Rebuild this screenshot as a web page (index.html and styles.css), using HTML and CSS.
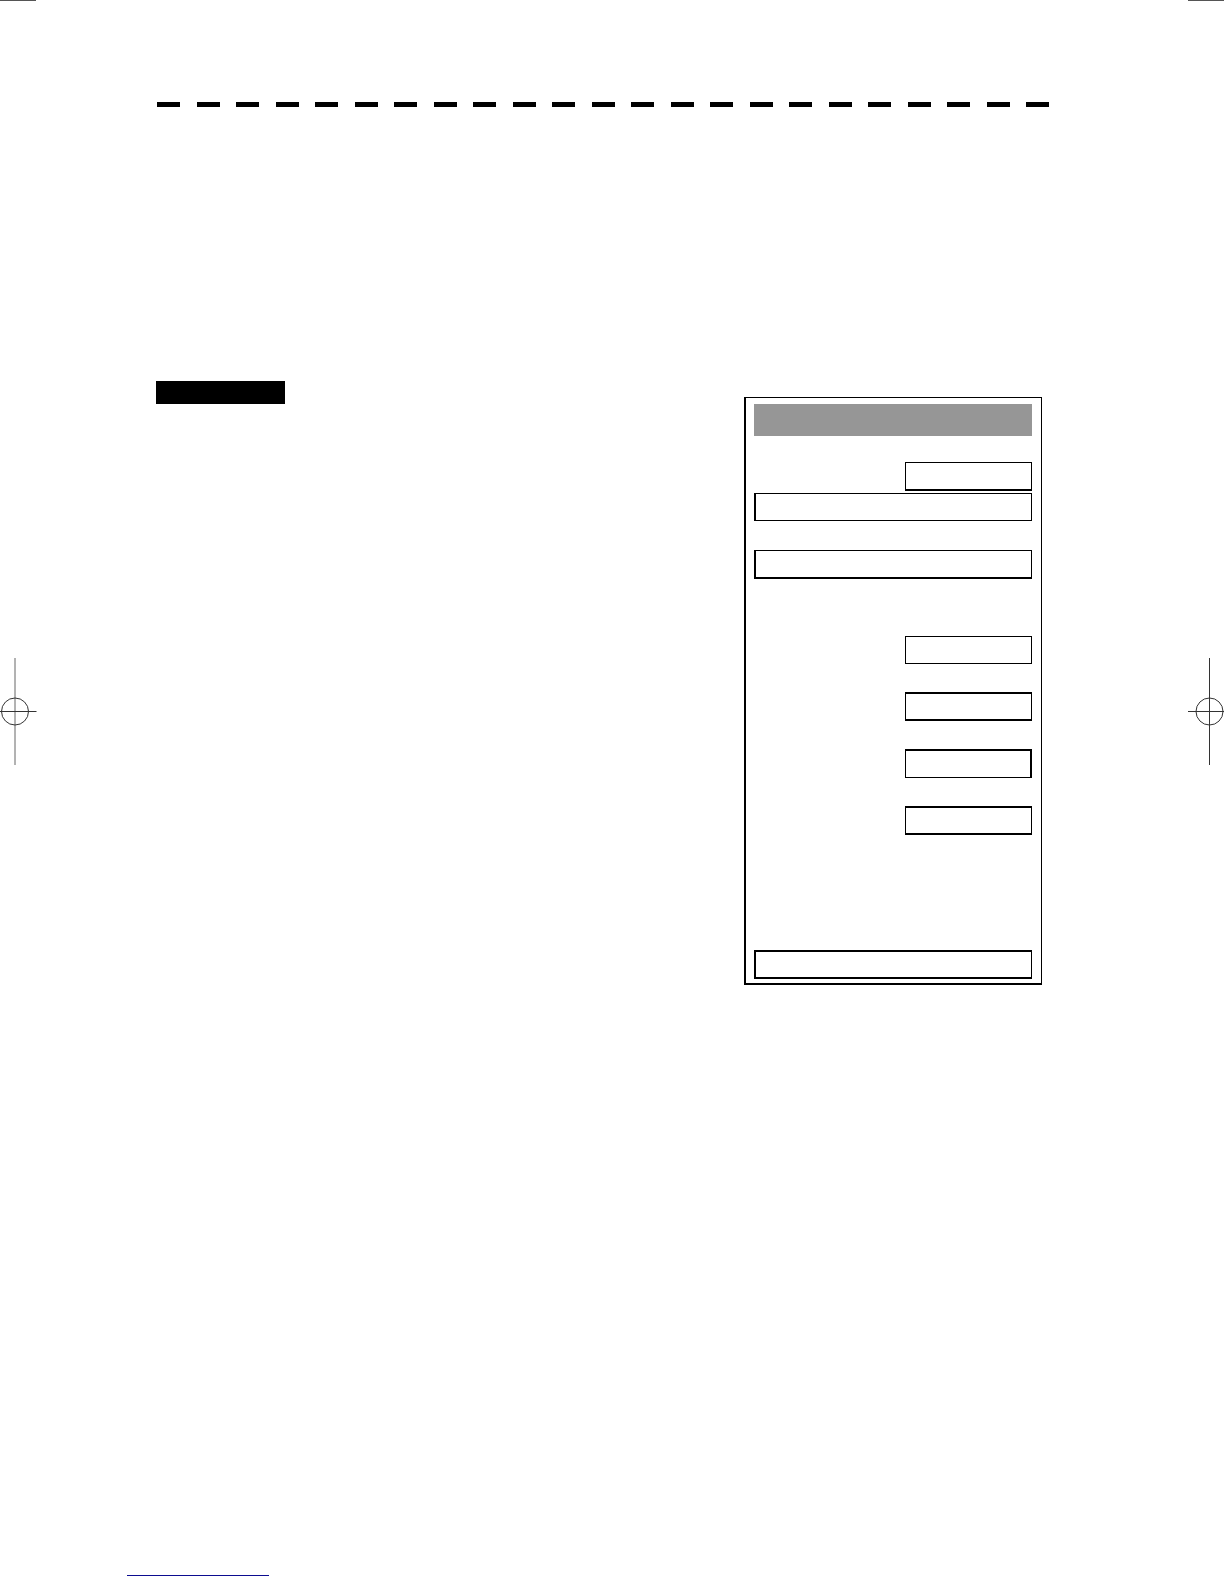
FILE: index.html
```
<!DOCTYPE html>
<html lang="en">

<head>
    <meta charset="UTF-8">
    <meta name="viewport" content="width=device-width, initial-scale=1.0">
    <title>Manual Page</title>
    <link rel="stylesheet" href="styles.css">
</head>

<body>

    <!-- Trim marks -->
    <div class="trim-marks">
        <span class="trim"></span>
        <span class="trim"></span>
    </div>

    <div class="sheet">
        <svg class="register" width="37" height="107" viewBox="0 0 37 107" fill="none" stroke="#333">
            <path d="M15 0V107" stroke="#666" />
            <path d="M0 53.5H36.5" />
            <circle cx="15" cy="53.5" r="13.5" />
        </svg>

        <main class="content">
            <div class="dashes">
                <span></span><span></span><span></span><span></span><span></span><span></span>
                <span></span><span></span><span></span><span></span><span></span><span></span>
                <span></span><span></span><span></span><span></span><span></span><span></span>
                <span></span><span></span><span></span><span></span><span></span>
            </div>

            <div class="columns">
                <div class="label"></div>

                <form class="panel">
                    <div class="panel-title"></div>
                    <input type="text" class="field short thick-bottom after-title" aria-label="Field 1">
                    <input type="text" class="field thick-left joined" aria-label="Field 2">
                    <input type="text" class="field thick-left thick-bottom" aria-label="Field 3">
                    <input type="text" class="field short new-group" aria-label="Field 4">
                    <input type="text" class="field short thick-top thick-bottom" aria-label="Field 5">
                    <input type="text" class="field short thick-top thick-right" aria-label="Field 6">
                    <input type="text" class="field short thick-top thick-bottom" aria-label="Field 7">
                    <input type="text" class="field thick-left thick-top thick-bottom last" aria-label="Field 8">
                </form>
            </div>
        </main>

        <svg class="register" width="36" height="107" viewBox="0 0 36 107" fill="none" stroke="#333">
            <path d="M21.5 0V107" />
            <path d="M0 53.5H36" />
            <circle cx="21.5" cy="53.5" r="13.5" />
        </svg>
    </div>

    <footer class="footer">
        <div class="footer-line"></div>
    </footer>

</body>

</html>
```
FILE: styles.css
```
* {
    box-sizing: border-box;
}

body {
    font-family: "Liberation Sans", Arial, sans-serif;
    margin: 0;
    background-color: #fff;
    min-height: 100vh;
    display: flex;
    flex-direction: column;
}

.trim-marks {
    display: flex;
    justify-content: space-between;
}

.trim {
    width: 36px;
    height: 1px;
    background-color: #555;
}

.sheet {
    display: flex;
    align-items: flex-start;
}

.register {
    flex: none;
    margin-top: 657px;
}

.content {
    flex: 1;
    padding: 101px 139px 0 119px;
}

/* dashed rule across the top of the page */
.dashes {
    display: flex;
    justify-content: space-between;
    margin-left: 1px;
}

.dashes span {
    width: 23px;
    height: 5px;
    background-color: #000;
}

.columns {
    display: flex;
    justify-content: space-between;
    align-items: flex-start;
    margin-top: 274px;
    padding-right: 7px;
}

.label {
    width: 129px;
    height: 23px;
    background-color: #000;
}

.panel {
    display: flex;
    flex-direction: column;
    width: 298px;
    margin-top: 16px;
    padding: 6px 9px 4px 8px;
    border: solid #000;
    border-width: 1px 1px 2px 2px;
}

.panel-title {
    height: 32px;
    background-color: #969696;
}

.field {
    width: 100%;
    height: 29px;
    margin: 28px 0 0;
    padding: 0 6px;
    border: 1px solid #000;
    border-radius: 0;
    background-color: #fff;
    font: inherit;
    font-size: 14px;
}

.short {
    width: 127px;
    align-self: flex-end;
}

.after-title {
    margin-top: 26px;
}

.joined {
    height: 28px;
    margin-top: 2px;
}

.field.joined + .field {
    margin-top: 29px;
}

.new-group {
    height: 28px;
    margin-top: 57px;
}

.last {
    margin-top: 115px;
}

.thick-top {
    border-top-width: 2px;
}

.thick-right {
    border-right-width: 2px;
}

.thick-bottom {
    border-bottom-width: 2px;
}

.thick-left {
    border-left-width: 2px;
}

.footer {
    margin-top: auto;
    padding: 0 0 8px 127px;
}

.footer-line {
    width: 142px;
    height: 1px;
    background-color: #0c0c90;
}
```
